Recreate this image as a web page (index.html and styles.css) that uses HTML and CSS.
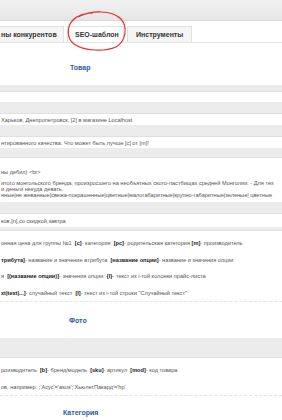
FILE: index.html
```html
<!DOCTYPE html>
<html lang="ru">
<head>
    <meta charset="UTF-8">
    <title>SEO-шаблон</title>
    <link rel="stylesheet" href="styles.css">
</head>
<body>
    <div class="topbar"></div>

    <!-- Tabs -->
    <div class="tabs">
        <div class="tab first">ны конкурентов</div>
        <div class="tab active">SEO-шаблон</div>
        <div class="tab">Инструменты</div>
    </div>

    <!-- hand-drawn circle round the active tab -->
    <svg class="mark" width="282" height="60" viewBox="0 0 282 60">
        <path d="M78 17 C92 10 112 10 121 19 C128 27 126 41 116 47 C104 52 84 51 74 44 C66 38 67 26 73 20 C78 15 86 13 93 13" fill="none" stroke="#e2312e" stroke-width="1.2"/>
    </svg>

    <!-- Товар -->
    <div class="title">Товар</div>
    <div class="bar h7"></div>
    <div class="row h10"></div>
    <div class="bar h12"></div>
    <div class="row h11">Харьков, Днепропетровск, [2] в магазине Localhost</div>
    <div class="bar h12"></div>
    <div class="row h11">нтированного качества. Что может быть лучше [c] от [m]!</div>
    <div class="bar h10"></div>
    <div class="area">
        <p>ны дебил) &lt;br&gt;</p>
        <p>итого монгольского бренда, произросшего на необъятных ското-пастбищах средней Монголии. - Для тех</p>
        <p>и деньги некуда девать.</p>
        <p>нные|не жеванные|свежа-покрашенные|цветные|малогабаритные|крупно-габаритные|зеленые| цветные</p>
    </div>
    <div class="bar h12"></div>
    <div class="row h13">ков,[n],со скидкой,завтра</div>
    <div class="bar h4"></div>

    <div class="help">
        <p>онная цена для группы №1 &nbsp;<b>[c]</b>- категория &nbsp;<b>[pc]</b>- родительская категория <b>[m]</b>- производитель</p>
        <p><b>трибута]</b>- название и значение атрибута &nbsp;<b>[название опции]</b>- название и значения опции</p>
        <p>я &nbsp;<b>[(название опции)]</b>- значения опции &nbsp;<b>{I}</b>- текст из i-той колонки прайс-листа</p>
        <p><b>xt|text|...]</b>- случайный текст &nbsp;<b>[l]</b>- текст из i-той строки "Случайный текст"</p>
    </div>

    <!-- Фото -->
    <div class="title photo">Фото</div>
    <div class="bar h20"></div>
    <div class="help">
        <p>роизводитель &nbsp;<b>[b]</b>- бренд/модель &nbsp;<b>[sku]</b>- артикул &nbsp;<b>[mod]</b>- код товара</p>
        <p>ов, например: ;'Асус'='asus';'ХьюлетПакард'='hp'</p>
    </div>

    <!-- Категория -->
    <div class="title cat">Категория</div>
</body>
</html>
```

FILE: styles.css
```css
body {
    margin: 0;
    width: 282px;
    height: 420px;
    overflow: hidden;
    background: #fff;
    font-family: "Liberation Sans", Arial, sans-serif;
    color: #555;
    position: relative;
}

/* Top grey strip */
.topbar {
    height: 20px;
    background: linear-gradient(#f2f2f2, #e6e6e6);
    border-bottom: 1px solid #d6d6d6;
}

/* Tabs */
.tabs {
    display: flex;
    gap: 3px;
    margin-top: 5px;
    height: 16px;
    border-bottom: 1px solid #e6e6e6;
}

.tab {
    height: 16px;
    line-height: 16px;
    padding: 0 8px;
    box-sizing: border-box;
    border: 1px solid #e2e2e2;
    border-bottom: none;
    background: #f5f5f5;
    font-size: 7px;
    font-weight: bold;
    color: #333;
    white-space: nowrap;
}

.tab.first {
    border-left: none;
    padding-left: 1px;
    width: 64px;
}

.tab.active {
    background: #fff;
    width: 57px;
    padding-left: 7px;
}

.mark {
    position: absolute;
    top: 0;
    left: 0;
}

/* Section titles */
.title {
    height: 42px;
    padding-top: 20px;
    box-sizing: border-box;
    padding-left: 70px;
    line-height: 10px;
    font-size: 7px;
    font-weight: bold;
    color: #2c5b9c;
}

.title.photo {
    height: 36px;
    padding-top: 14px;
    padding-left: 69px;
}

.title.cat {
    height: 24px;
    padding-top: 12px;
    padding-left: 63px;
}

/* Grey field rows */
.bar {
    background: #ececec;
    border-bottom: 1px solid #e0e0e0;
    box-sizing: border-box;
}

.row {
    box-sizing: border-box;
    padding-left: 1px;
    font-size: 5.6px;
    white-space: nowrap;
    overflow: hidden;
    display: flex;
    align-items: center;
}

.h4 { height: 4px; }
.h7 { height: 7px; }
.h10 { height: 10px; }
.h11 { height: 11px; }
.h12 { height: 12px; }
.h13 { height: 13px; }
.h20 { height: 20px; }

/* Multi-line text box */
.area {
    padding: 11px 0 4px 1px;
    font-size: 5.6px;
    line-height: 6px;
    white-space: nowrap;
    overflow: hidden;
}

.area p {
    margin: 0;
}

.area p:first-child {
    margin-bottom: 5px;
}

/* Placeholder help text */
.help {
    padding: 4px 0 0 1px;
    font-size: 5.6px;
    line-height: 16.5px;
    white-space: nowrap;
    overflow: hidden;
    border-bottom: 1px dashed #e4e4e4;
}

.help p {
    margin: 0;
}

.help b {
    color: #222;
}
```
